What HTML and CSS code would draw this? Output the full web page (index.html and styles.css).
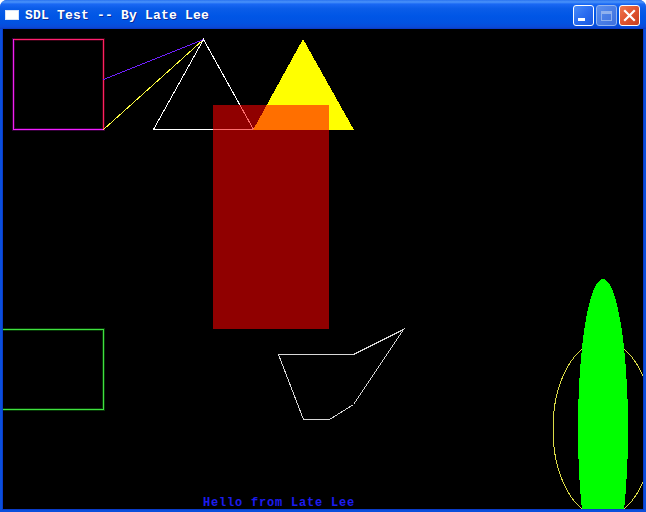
FILE: index.html
```html
<!DOCTYPE html>
<html>
<head>
<meta charset="utf-8">
<link rel="stylesheet" href="styles.css">
</head>
<body>
<div class="window">
  <div class="titlebar">
    <svg class="app-icon" width="14" height="10" viewBox="0 0 14 10">
      <rect x="0" y="0" width="14" height="10" fill="#ffffff"/>
      <rect x="0.5" y="0.5" width="13" height="9" fill="none" stroke="#d8e4f8"/>
    </svg>
    <span class="title">SDL Test -- By Late Lee</span>
    <div class="buttons">
      <div class="btn btn-min"><span class="min-bar"></span></div>
      <div class="btn btn-max"><span class="max-box"></span></div>
      <div class="btn btn-close">
        <svg width="13" height="13" viewBox="0 0 13 13">
          <path d="M2 2 L11 11 M11 2 L2 11" stroke="#ffffff" stroke-width="2.2" stroke-linecap="square"/>
        </svg>
      </div>
    </div>
  </div>
  <div class="client">
    <svg class="canvas" width="640" height="480" viewBox="0 0 640 480">
      <g shape-rendering="crispEdges" opacity="0.22">
        <rect x="9" y="9" width="93" height="3" fill="#ff1060"/>
        <rect x="99" y="9" width="3" height="93" fill="#ff1050"/>
        <rect x="9" y="9" width="3" height="93" fill="#f000f0"/>
        <rect x="9" y="99" width="93" height="3" fill="#f000ff"/>
        <rect x="0" y="299" width="102" height="3" fill="#20ff20"/>
        <rect x="99" y="299" width="3" height="83" fill="#20ff20"/>
        <rect x="0" y="379" width="102" height="3" fill="#20ff20"/>
      </g>
      <g shape-rendering="crispEdges">
        <rect x="10" y="10" width="91" height="1" fill="#ff2070"/>
        <rect x="100" y="10" width="1" height="91" fill="#ff2060"/>
        <rect x="10" y="10" width="1" height="91" fill="#f020f0"/>
        <rect x="10" y="100" width="91" height="1" fill="#f020ff"/>
      </g>
      <g shape-rendering="crispEdges" fill="none" stroke-width="1">
        <line x1="100.5" y1="50.5" x2="200.5" y2="10.5" stroke="#7020ff"/>
        <line x1="100.5" y1="100.5" x2="200.5" y2="10.5" stroke="#ffff40"/>
        <polygon points="200.5,10.5 150.5,100.5 250.5,100.5" stroke="#ffffff"/>
      </g>
      <polygon points="300,10 250,101 351,101" fill="#ffff00" shape-rendering="crispEdges"/>
      <rect x="210" y="76" width="116" height="224" fill="rgb(255,0,0)" fill-opacity="0.565" shape-rendering="crispEdges"/>
      <g shape-rendering="crispEdges">
        <rect x="0" y="300" width="101" height="1" fill="#40e040"/>
        <rect x="100" y="300" width="1" height="81" fill="#40e040"/>
        <rect x="0" y="380" width="101" height="1" fill="#40e040"/>
      </g>
      <g shape-rendering="crispEdges" fill="none">
        <polygon points="275.5,325.5 350.5,325.5 400.5,300.5 350.5,375.5 326.5,390.5 300.5,390.5" stroke="#d8d8d8"/>
        <ellipse cx="600" cy="400" rx="50" ry="88" stroke="#dcdc48"/>
      </g>
      <ellipse cx="600" cy="400" rx="25" ry="150" fill="#00ff00" shape-rendering="crispEdges"/>
      <text class="hello" x="200" y="477">Hello from Late Lee</text>
    </svg>
  </div>
</div>
</body>
</html>
```
FILE: styles.css
```css
html, body {
  margin: 0;
  padding: 0;
  background: #ffffff;
}

.window {
  width: 646px;
  height: 512px;
  display: flex;
  flex-direction: column;
  background: #0a4fdc;
  border-radius: 7px 7px 0 0;
  overflow: hidden;
}

.titlebar {
  height: 29px;
  flex: 0 0 29px;
  display: flex;
  align-items: center;
  padding: 0 5px 0 5px;
  box-sizing: border-box;
  background: linear-gradient(to bottom,
    #2a73f0 0%,
    #4a93fa 7%,
    #1a68f4 14%,
    #0a5ce8 30%,
    #0056e6 55%,
    #0252e2 80%,
    #0a4ad8 93%,
    #0a3fc8 100%);
}

.app-icon {
  flex: 0 0 auto;
  margin-right: 6px;
  margin-top: 1px;
}

.title {
  font-family: "Liberation Mono", "DejaVu Sans Mono", monospace;
  font-weight: bold;
  font-size: 13px;
  letter-spacing: 0.2px;
  color: #ffffff;
  text-shadow: 1px 1px 0 #0a2c9a;
  flex: 1 1 auto;
  white-space: nowrap;
  margin-top: 1px;
}

.buttons {
  display: flex;
  gap: 2px;
  margin-top: 2px;
  margin-right: 1px;
}

.btn {
  width: 21px;
  height: 21px;
  box-sizing: border-box;
  border: 1px solid #ffffff;
  border-radius: 3px;
  display: flex;
  align-items: center;
  justify-content: center;
  position: relative;
}

.btn-min {
  background: linear-gradient(135deg, #4a8cf8 0%, #2a6cf0 50%, #1a58e0 100%);
}

.min-bar {
  position: absolute;
  left: 4px;
  bottom: 4px;
  width: 7px;
  height: 3px;
  background: #ffffff;
}

.btn-max {
  background: linear-gradient(135deg, #5c90ee 0%, #4a7ee6 50%, #3e70de 100%);
  border-color: #93b4f0;
}

.max-box {
  width: 11px;
  height: 10px;
  box-sizing: border-box;
  border: 1px solid #8fb0ee;
  border-top-width: 3px;
}

.btn-close {
  background: linear-gradient(135deg, #f07850 0%, #e05430 50%, #c83e1c 100%);
}

.client {
  flex: 1 1 auto;
  margin: 0 3px 3px 3px;
  background: #000000;
  border: 0;
  height: 480px;
  width: 640px;
  box-shadow: 0 0 0 1px #0a3cc8;
}

.canvas {
  display: block;
}

.hello {
  font-family: "Liberation Mono", "DejaVu Sans Mono", monospace;
  font-weight: bold;
  font-size: 12px;
  letter-spacing: 0.8px;
  fill: #1c1cf0;
}
```
